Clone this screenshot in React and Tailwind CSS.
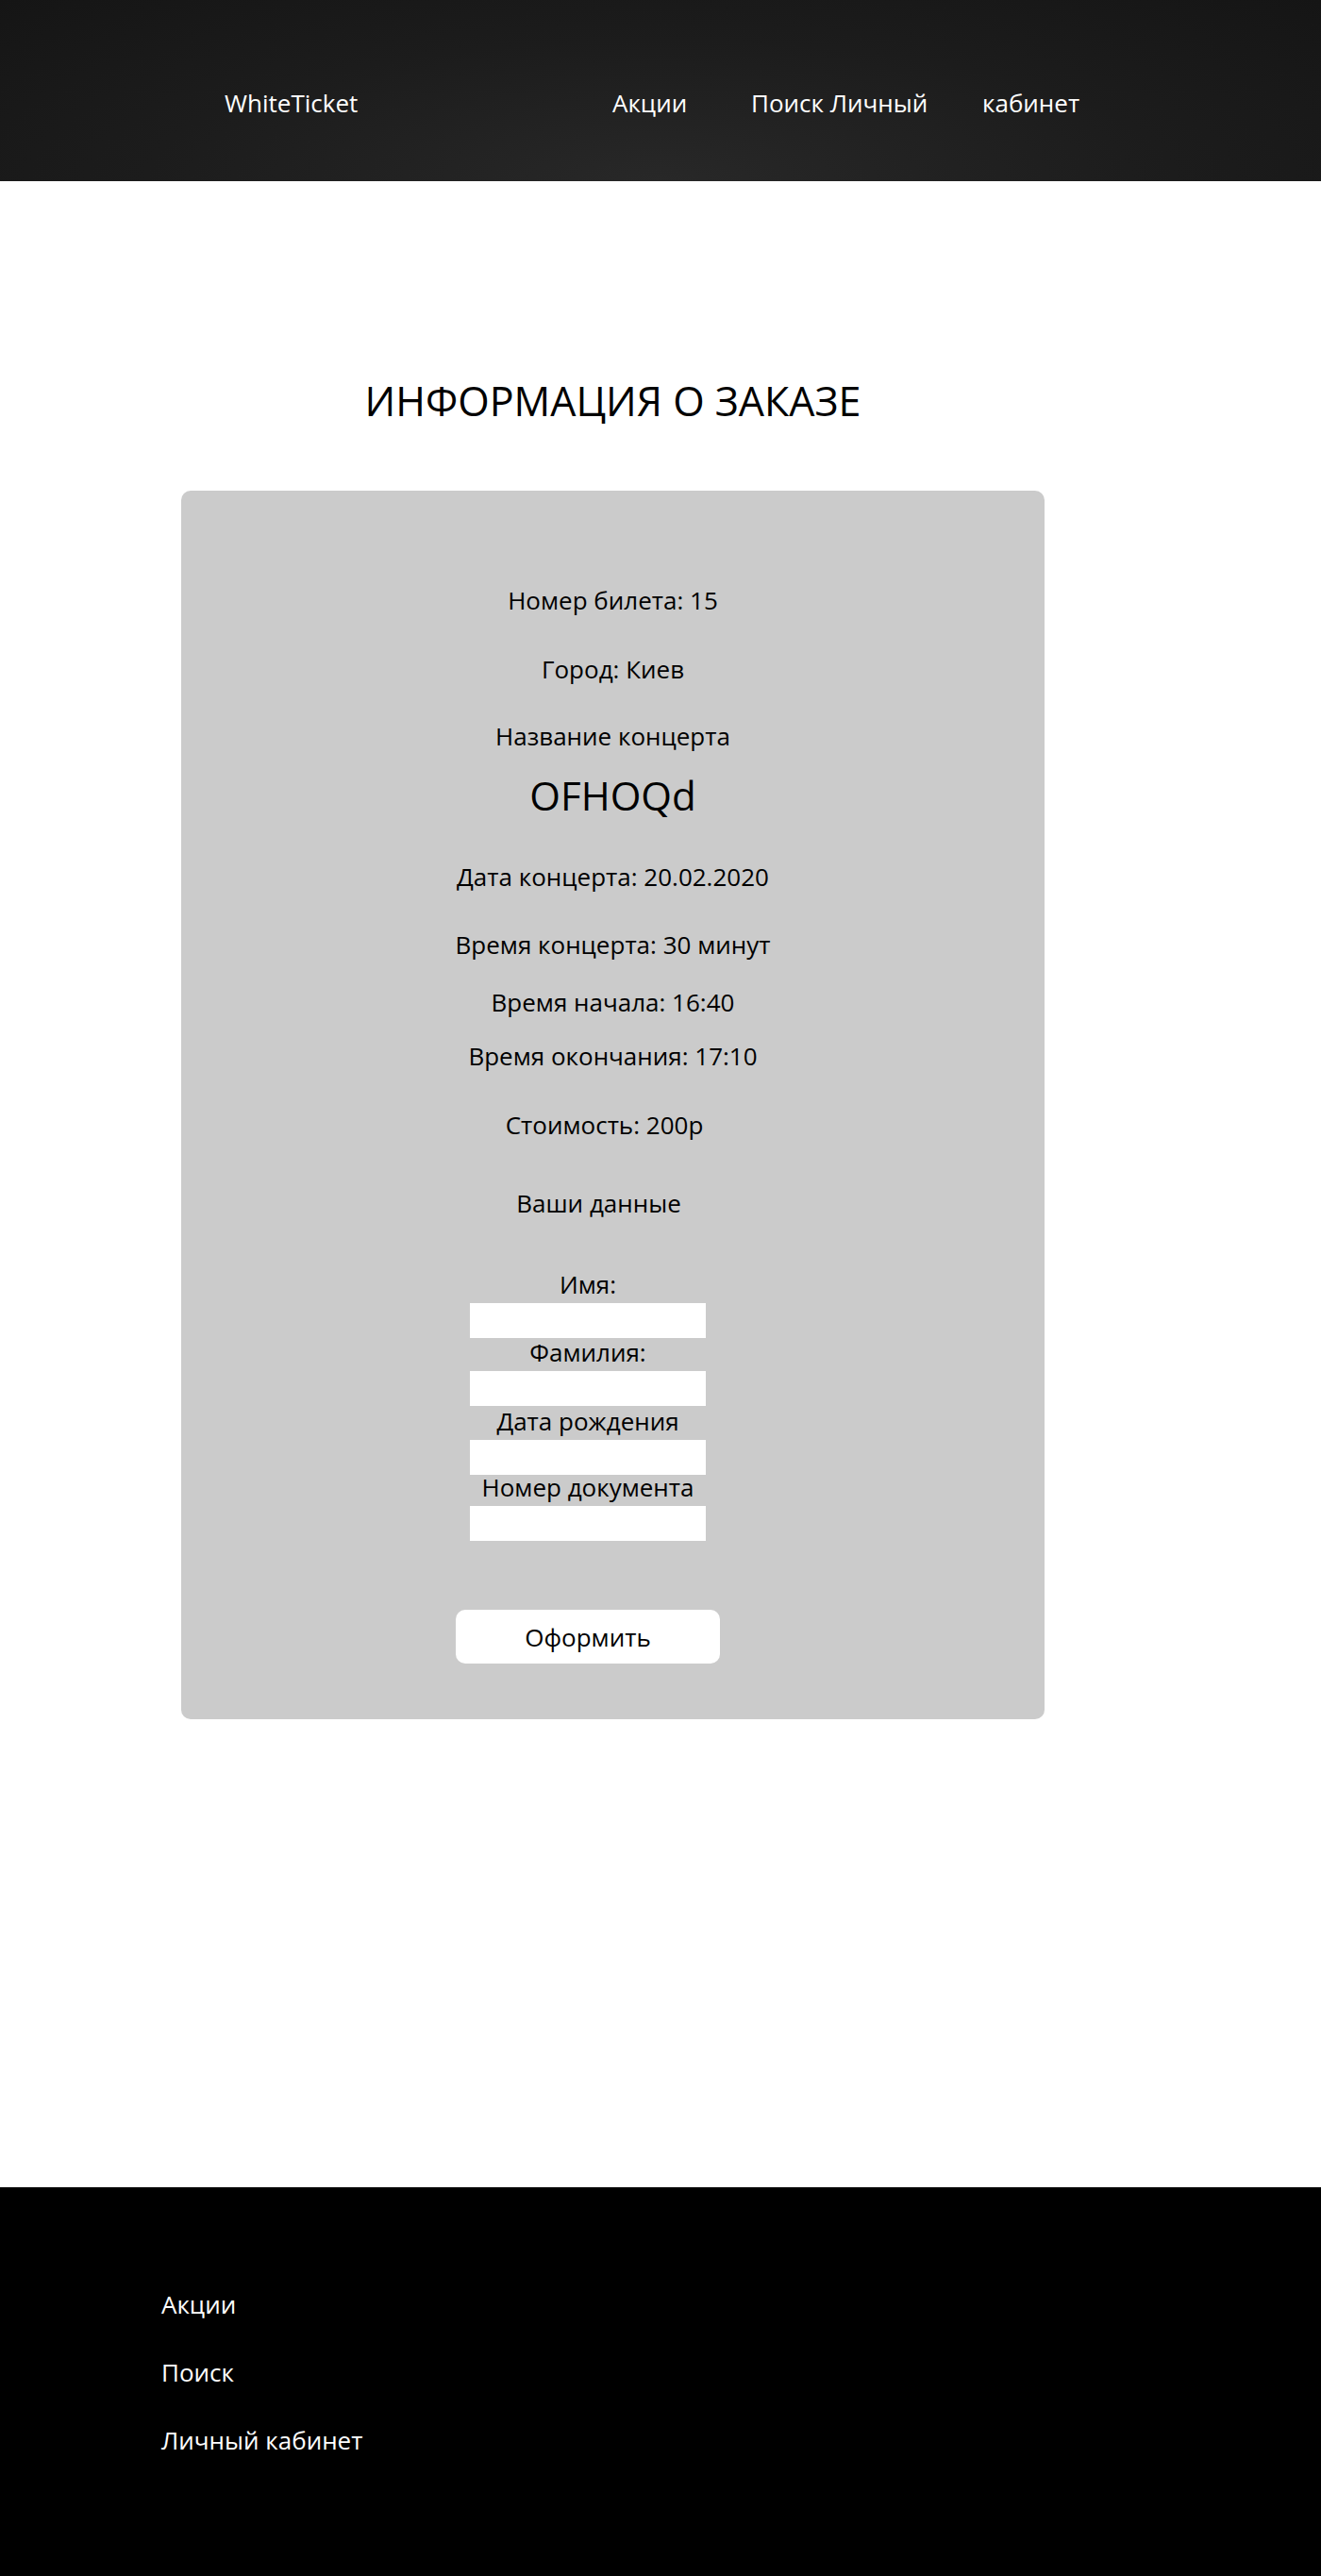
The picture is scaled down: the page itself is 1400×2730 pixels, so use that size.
const infoRows = [
  { text: "Номер билета: 15", mt: "mt-0" },
  { text: "Город: Киев", mt: "mt-[47px]" },
  { text: "Название концерта", mt: "mt-[45px]" },
];

const timeRows = [
  { text: "Дата концерта: 20.02.2020", mt: "mt-[52px]" },
  { text: "Время концерта: 30 минут", mt: "mt-[46px]" },
  { text: "Время начала: 16:40", mt: "mt-[35px]" },
  { text: "Время окончания: 17:10", mt: "mt-[31px]" },
  { text: "Стоимость: 200р", mt: "mt-[47px] pr-[18px]" },
];

const fields = [
  { label: "Имя:", mt: "mt-0" },
  { label: "Фамилия:", mt: "mt-[2px]" },
  { label: "Дата рождения", mt: "mt-[3px]" },
  { label: "Номер документа", mt: "mt-0" },
];

const Header = () => (
  <header className="h-[192px] flex items-start pt-[96px] pl-[238px] text-white text-[26px] leading-none bg-[radial-gradient(ellipse_at_50%_100%,#282828_0%,#1c1c1c_55%,#151515_100%)]">
    <span className="w-[411px]">WhiteTicket</span>
    <nav className="flex">
      <a className="w-[147px]">Акции</a>
      <a className="w-[245px]">Поиск Личный</a>
      <a>кабинет</a>
    </nav>
  </header>
);

const OrderCard = () => (
  <div className="w-[915px] bg-[#cbcbcb] rounded-[10px] pt-[103px] pb-[59px] text-black text-[26px] leading-none">
    <div className="text-center">
      {infoRows.map((row) => (
        <p key={row.text} className={row.mt}>{row.text}</p>
      ))}
      <p className="mt-[29px] text-[42px] leading-none">OFHOQd</p>
      {timeRows.map((row) => (
        <p key={row.text} className={row.mt}>{row.text}</p>
      ))}
      <p className="mt-[57px] pr-[30px]">Ваши данные</p>
    </div>

    {/* form */}
    <div className="w-[250px] ml-[306px] mt-[60px] text-center">
      {fields.map((f) => (
        <div key={f.label} className={f.mt}>
          <label className="block">{f.label}</label>
          <input className="block w-full h-[37px] mt-[7px] bg-white outline-none" />
        </div>
      ))}
    </div>

    <button className="block w-[280px] h-[57px] ml-[291px] mt-[73px] bg-white rounded-[10px] text-[26px] leading-none">
      Оформить
    </button>
  </div>
);

const Footer = () => (
  <footer className="h-[412px] bg-black text-white text-[26px] leading-none pt-[111px] pl-[171px]">
    <ul className="flex flex-col gap-[46px]">
      <li>Акции</li>
      <li>Поиск</li>
      <li>Личный кабинет</li>
    </ul>
  </footer>
);

export default function App() {
  return (
    <div className="w-[1400px] min-h-[2730px] bg-white font-['Open_Sans',sans-serif] flex flex-col">
      <Header />
      <main className="flex-1 pl-[192px] pt-[211px]">
        <h1 className="w-[915px] text-center text-[43px] leading-none text-black">
          ИНФОРМАЦИЯ О ЗАКАЗЕ
        </h1>
        <div className="mt-[74px]">
          <OrderCard />
        </div>
      </main>
      <Footer />
    </div>
  );
}
